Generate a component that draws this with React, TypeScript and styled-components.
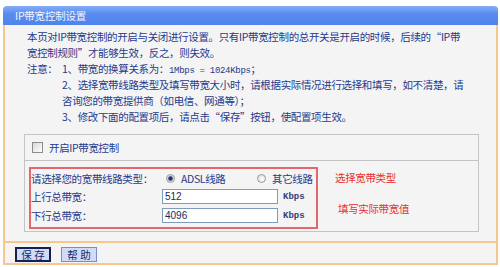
import styled, { createGlobalStyle } from "styled-components";

const GlobalStyle = createGlobalStyle`
  html, body {
    margin: 0;
    padding: 0;
    background: #ffffff;
  }
  body {
    font-family: "Noto Sans CJK SC", "Noto Sans", sans-serif;
    font-size: 10.5px;
    letter-spacing: -0.35px;
    color: #1f3a8c;
  }
`;

const App = (): JSX.Element => {
  return (
    <Page>
      <GlobalStyle />
      <TitleBar>IP带宽控制设置</TitleBar>
      <PanelBody>
        <Intro>
          <Line>
            本页对IP带宽控制的开启与关闭进行设置。只有IP带宽控制的总开关是开启的时候，后续的“IP带
          </Line>
          <Line>宽控制规则”才能够生效，反之，则失效。</Line>
          <NoteRow>
            <NoteLabel>注意：</NoteLabel>
            <NoteList>
              <Line>
                1、带宽的换算关系为：<Mono>1Mbps = 1024Kbps</Mono>；
              </Line>
              <Line>
                2、选择宽带线路类型及填写带宽大小时，请根据实际情况进行选择和填写，如不清楚，请
              </Line>
              <Line>咨询您的带宽提供商（如电信、网通等）；</Line>
              <Line>3、修改下面的配置项后，请点击“保存”按钮，使配置项生效。</Line>
            </NoteList>
          </NoteRow>
        </Intro>

        <Group>
          <CheckRow>
            <CheckBox />
            <span>开启IP带宽控制</span>
          </CheckRow>
          <GroupBottom>
            <RedBox>
              <FormRow>
                <Label>请选择您的宽带线路类型：</Label>
                <RadioGroup>
                  <RadioOption $width={91}>
                    <Radio $checked />
                    <span>ADSL线路</span>
                  </RadioOption>
                  <RadioOption>
                    <Radio />
                    <span>其它线路</span>
                  </RadioOption>
                </RadioGroup>
              </FormRow>
              <FormRow>
                <Label>上行总带宽：</Label>
                <Field>
                  <Input>512</Input>
                  <Unit>Kbps</Unit>
                </Field>
              </FormRow>
              <FormRow>
                <Label>下行总带宽：</Label>
                <Field>
                  <Input>4096</Input>
                  <Unit>Kbps</Unit>
                </Field>
              </FormRow>
            </RedBox>
            <Notes>
              <RedNote>选择宽带类型</RedNote>
              <RedNote $indent={3}>填写实际带宽值</RedNote>
            </Notes>
          </GroupBottom>
        </Group>

        <ButtonBar>
          <Button $focused>保 存</Button>
          <Button>帮 助</Button>
        </ButtonBar>
      </PanelBody>
    </Page>
  );
};

export default App;

const Page = styled.div`
  width: 495px;
  padding: 6px 0 0 3px;
`;

const TitleBar = styled.div`
  height: 19px;
  line-height: 19px;
  padding-left: 12px;
  border-radius: 4px 4px 0 0;
  background: linear-gradient(#86aef6, #5a8cf0 40%, #4f84ec);
  color: #f2f6ff;
  font-size: 10.5px;
  letter-spacing: -0.2px;
`;

const PanelBody = styled.div`
  border: 2px solid #f6c791;
  border-top: none;
  background: #f4f4f4;
`;

const Intro = styled.div`
  padding: 4px 0 0 22px;
  line-height: 16px;
`;

const Line = styled.div`
  white-space: nowrap;
  height: 16px;
`;

const NoteRow = styled.div`
  display: flex;
`;

const NoteLabel = styled.div`
  width: 35px;
  white-space: nowrap;
`;

const NoteList = styled.div`
  display: flex;
  flex-direction: column;
`;

const Mono = styled.span`
  font-family: "Liberation Mono", monospace;
  font-size: 9px;
  letter-spacing: -0.3px;
`;

const Group = styled.div`
  margin: 9px 17px 0 19px;
  border: 1px solid #c4c4c4;
`;

const CheckRow = styled.div`
  height: 25px;
  display: flex;
  align-items: center;
  gap: 6px;
  padding-left: 7px;
  border-bottom: 1px solid #c4c4c4;
`;

const CheckBox = styled.span`
  width: 9px;
  height: 9px;
  border: 1px solid #8c8c8c;
  background: linear-gradient(135deg, #d8d8d8, #ffffff);
`;

const GroupBottom = styled.div`
  display: flex;
  align-items: flex-start;
  padding: 6px 0 2px 4px;
`;

const RedBox = styled.div`
  width: 285px;
  padding: 0 0 2px 0;
  border: 2px solid #e4676c;
  display: flex;
  flex-direction: column;
`;

const FormRow = styled.div`
  height: 19px;
  display: grid;
  grid-template-columns: 131px 1fr;
  align-items: center;
  &:first-child {
    height: 18px;
  }
`;

const Label = styled.span`
  white-space: nowrap;
`;

const RadioGroup = styled.div`
  display: flex;
  align-items: center;
  padding-left: 4px;
`;

const RadioOption = styled.div<{ $width?: number }>`
  display: flex;
  align-items: center;
  gap: 6px;
  white-space: nowrap;
  width: ${(p) => (p.$width ? `${p.$width}px` : "auto")};
`;

const Radio = styled.span<{ $checked?: boolean }>`
  width: 9px;
  height: 9px;
  flex: none;
  box-sizing: border-box;
  border-radius: 50%;
  border: 1px solid #9a9a9a;
  background: ${(p) =>
    p.$checked
      ? "radial-gradient(circle, #27356b 0 1.8px, #a9b3d2 2.4px, #eef0f6 3.5px)"
      : "radial-gradient(circle at 60% 60%, #ffffff, #d4d4d4)"};
`;

const Field = styled.div`
  display: flex;
  align-items: center;
  gap: 5px;
`;

const Input = styled.div`
  width: 112px;
  height: 13px;
  line-height: 13px;
  padding-left: 2px;
  border: 1px solid #7f9db9;
  background: #ffffff;
  color: #222a55;
  font-family: "Liberation Sans", sans-serif;
  font-size: 10px;
  letter-spacing: 0;
`;

const Unit = styled.span`
  font-family: "Liberation Mono", monospace;
  font-size: 9px;
  font-weight: bold;
  letter-spacing: 0;
  color: #33407a;
`;

const Notes = styled.div`
  display: flex;
  flex-direction: column;
  gap: 16px;
  padding-top: 3px;
  margin-left: 17px;
`;

const RedNote = styled.span<{ $indent?: number }>`
  color: #e8302f;
  white-space: nowrap;
  padding-left: ${(p) => p.$indent ?? 0}px;
`;

const ButtonBar = styled.div`
  margin-top: 9px;
  border-top: 2px solid #f6c791;
  display: flex;
  gap: 10px;
  padding: 4px 0 1px 10px;
`;

const Button = styled.div<{ $focused?: boolean }>`
  width: ${(p) => (p.$focused ? 32 : 34)}px;
  height: ${(p) => (p.$focused ? 11 : 13)}px;
  line-height: ${(p) => (p.$focused ? 11 : 13)}px;
  text-align: center;
  background: #d2dbf6;
  border: ${(p) => (p.$focused ? "2px solid #14204f" : "1px solid #7d8cc4")};
  color: #1b2a6b;
  font-size: 10.5px;
  letter-spacing: 0;
  white-space: pre;
`;
